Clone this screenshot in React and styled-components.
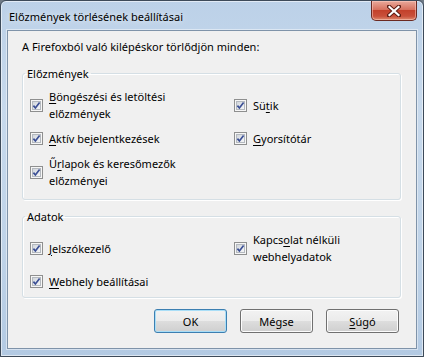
import React from 'react'
import styled, { createGlobalStyle } from 'styled-components'

const font = '"Noto Sans", "Open Sans", sans-serif'

const GlobalStyle = createGlobalStyle`
  html, body {
    margin: 0;
    padding: 0;
    background: #6f7a86;
  }
  * {
    box-sizing: border-box;
  }
`

const Window = styled.div`
  width: 424px;
  height: 357px;
  display: flex;
  flex-direction: column;
  border: 1px solid #3d4a59;
  border-radius: 6px 6px 0 0;
  padding: 0 6px 7px 6px;
  background: linear-gradient(to bottom, #bcd1e8 0%, #c7d9ec 30%, #bfd3e8 70%, #b3cae3 100%);
  box-shadow: inset 0 0 0 1px rgba(255, 255, 255, 0.55);
  font-family: ${font};
  font-size: 11px;
  color: #000;
`

const TitleBar = styled.div`
  height: 29px;
  flex: none;
  display: flex;
  justify-content: space-between;
  align-items: flex-start;
  margin: 0 -6px;
  padding: 0 6px 0 8px;
`

const Title = styled.div`
  padding-top: 7px;
  line-height: 17px;
  font-size: 11px;
  color: #000;
  text-shadow: 0 0 6px rgba(255, 255, 255, 0.9);
`

const CloseButton = styled.div`
  width: 46px;
  height: 20px;
  display: flex;
  align-items: center;
  justify-content: center;
  border: 1px solid #6b2a22;
  border-top: none;
  border-radius: 0 0 5px 5px;
  background: linear-gradient(
    to bottom,
    #e9a99b 0%,
    #d7725f 45%,
    #c3412b 50%,
    #c9503a 80%,
    #de8a6e 100%
  );
  box-shadow: inset 0 0 0 1px rgba(255, 210, 200, 0.5);
`

const Client = styled.div`
  flex: 1;
  display: flex;
  flex-direction: column;
  border: 1px solid #7f93a9;
  background: #f0f0f0;
  padding: 7px 15px 0 14px;
  box-shadow: 0 0 0 1px rgba(255, 255, 255, 0.45);
`

const Intro = styled.div`
  line-height: 17px;
`

const Group = styled.fieldset`
  margin: ${(p) => p.$top}px 0 0 0;
  min-width: 0;
  border: 1px solid #d5dfe5;
  border-radius: 3px;
  padding: 6px 0 ${(p) => p.$bottom}px 7px;
  box-shadow: inset 1px 1px 0 #fff, 1px 1px 0 #fff;
`

const Legend = styled.legend`
  padding: 0 2px;
  margin-left: -5px;
  line-height: 17px;
  color: #000;
`

const Grid = styled.div`
  display: grid;
  grid-template-columns: 204px 1fr;
  row-gap: 8px;
  align-items: center;
`

const Item = styled.label`
  display: flex;
  align-items: center;
  gap: 6px;
  line-height: 17px;
  color: #000;
`

const Key = styled.span`
  text-decoration: underline;
  text-underline-offset: 2px;
`

const Buttons = styled.div`
  display: flex;
  justify-content: flex-end;
  gap: 13px;
  margin-top: 11px;
  padding-right: 2px;
`

const Button = styled.div`
  width: 73px;
  height: 24px;
  display: flex;
  align-items: center;
  justify-content: center;
  border: 1px solid ${(p) => (p.$default ? '#3c7fb1' : '#707070')};
  border-radius: 3px;
  background: linear-gradient(to bottom, #f2f2f2 0%, #ebebeb 50%, #dddddd 51%, #cfcfcf 100%);
  box-shadow: inset 0 0 0 1px ${(p) => (p.$default ? '#a9def7' : '#fcfcfc')};
  font-size: 11px;
  color: #000;
`

const Check = () => (
  <svg width="13" height="13" viewBox="0 0 13 13" style={{ flex: 'none' }}>
    <defs>
      <linearGradient id="cbfill" x1="0" y1="0" x2="1" y2="1">
        <stop offset="0" stopColor="#cfd4da" />
        <stop offset="1" stopColor="#f7f8f9" />
      </linearGradient>
    </defs>
    <rect x="0.5" y="0.5" width="12" height="12" fill="#f6f6f6" stroke="#8e8f8f" />
    <rect x="2.5" y="2.5" width="8" height="8" fill="url(#cbfill)" stroke="#b4b9bf" />
    <path d="M3.4 6.6 L5.4 9 L9.6 3.6" fill="none" stroke="#3b4f95" strokeWidth="1.7" />
  </svg>
)

const CloseX = () => (
  <svg width="14" height="12" viewBox="0 0 14 12">
    <path
      d="M2 1.5 L12 10.5 M12 1.5 L2 10.5"
      stroke="#5a1b12"
      strokeWidth="4"
      strokeLinecap="square"
    />
    <path
      d="M2.5 2 L11.5 10 M11.5 2 L2.5 10"
      stroke="#ffffff"
      strokeWidth="2.2"
      strokeLinecap="square"
    />
  </svg>
)

const CheckItem = ({ children }) => (
  <Item>
    <Check />
    <span>{children}</span>
  </Item>
)

const App = () => (
  <>
    <GlobalStyle />
    <Window>
      <TitleBar>
        <Title>Előzmények törlésének beállításai</Title>
        <CloseButton>
          <CloseX />
        </CloseButton>
      </TitleBar>
      <Client>
        <Intro>A Firefoxból való kilépéskor törlődjön minden:</Intro>

        <Group $top={10} $bottom={10}>
          <Legend>Előzmények</Legend>
          <Grid>
            <CheckItem>
              <Key>B</Key>öngészési és letöltési
              <br />
              előzmények
            </CheckItem>
            <CheckItem>
              Sü<Key>t</Key>ik
            </CheckItem>
            <CheckItem>
              <Key>A</Key>ktív bejelentkezések
            </CheckItem>
            <CheckItem>
              <Key>G</Key>yorsítótár
            </CheckItem>
            <CheckItem>
              Ű<Key>r</Key>lapok és keresőmezők
              <br />
              előzményei
            </CheckItem>
          </Grid>
        </Group>

        <Group $top={8} $bottom={7}>
          <Legend>Adatok</Legend>
          <Grid>
            <CheckItem>
              <Key>J</Key>elszókezelő
            </CheckItem>
            <CheckItem>
              Kapcs<Key>o</Key>lat nélküli
              <br />
              webhelyadatok
            </CheckItem>
            <CheckItem>
              <Key>W</Key>ebhely beállításai
            </CheckItem>
          </Grid>
        </Group>

        <Buttons>
          <Button $default>OK</Button>
          <Button>Mégse</Button>
          <Button>
            <span>
              <Key>S</Key>úgó
            </span>
          </Button>
        </Buttons>
      </Client>
    </Window>
  </>
)

export default App
